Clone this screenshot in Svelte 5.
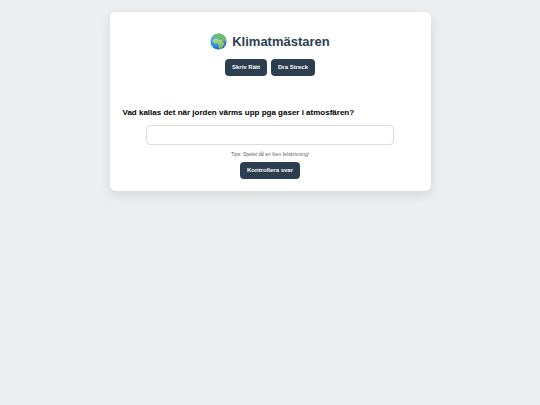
<script lang="ts">
  type Mode = 'write' | 'match';

  let mode: Mode = 'write';
  let answer = '';

  const question = 'Vad kallas det när jorden värms upp pga gaser i atmosfären?';

  function setMode(next: Mode) {
    mode = next;
    answer = '';
  }

  function checkAnswer() {
    answer = answer.trim();
  }
</script>

<style>
  :global(body) {
    background-color: #ebeff0;
    font-family: "Liberation Sans", Arial, sans-serif;
  }
  .card {
    box-sizing: border-box;
    max-width: 321px;
    margin: 12px auto;
    padding: 21px 13px 12px;
    background-color: #fff;
    border-radius: 6px;
    box-shadow: 0 4px 12px rgba(0, 0, 0, 0.1);
    text-align: center;
  }
  h1 {
    display: flex;
    justify-content: center;
    align-items: center;
    gap: 5px;
    margin: 0 0 9px;
    color: #2c3e50;
    font-size: 13px;
    line-height: 17px;
  }
  h1 svg {
    width: 17px;
    height: 17px;
  }
  nav {
    display: flex;
    justify-content: center;
    gap: 4px;
    margin-bottom: 31px;
  }
  button {
    display: block;
    padding: 5px 7px;
    background-color: #2c3e50;
    color: #fff;
    border: none;
    border-radius: 4px;
    font-family: inherit;
    font-size: 6px;
    font-weight: bold;
    line-height: 7px;
    cursor: pointer;
  }
  button:hover {
    background-color: #34495e;
  }
  form button {
    margin: 0 auto;
  }
  label {
    display: block;
    margin-bottom: 7px;
    font-size: 8px;
    font-weight: bold;
    line-height: 11px;
    color: #000;
    text-align: left;
  }
  input {
    display: block;
    width: 80%;
    height: 8px;
    margin: 0 auto 6px;
    padding: 5px;
    border: 1px solid #ddd;
    border-radius: 4px;
    font-family: inherit;
    font-size: 8px;
  }
  .tip {
    margin: 0 0 5px;
    color: #666;
    font-size: 5px;
    line-height: 6px;
  }
</style>

<main class="card">
  <h1>
    <svg viewBox="0 0 32 32" aria-hidden="true">
      <defs>
        <radialGradient id="sea" cx="36%" cy="35%" r="68%">
          <stop offset="0" stop-color="#6cc5f2" />
          <stop offset="0.6" stop-color="#2f92e6" />
          <stop offset="1" stop-color="#1558cc" />
        </radialGradient>
        <linearGradient id="land" x1="0" y1="0" x2="0" y2="1">
          <stop offset="0" stop-color="#b5d58c" />
          <stop offset="0.4" stop-color="#9ccb74" />
          <stop offset="1" stop-color="#63b55c" />
        </linearGradient>
        <clipPath id="globe"><circle cx="16" cy="16" r="15" /></clipPath>
      </defs>
      <circle cx="16" cy="16" r="15" fill="url(#sea)" />
      <g clip-path="url(#globe)">
        <path fill="#74bd63" d="M8 5l4-3 5-2 7 2 5 5 3 8-3 2-2-3-2 3-3-4-4-1-3 0-2-2-3 1-3 0-1-3 2-2z" />
        <path fill="#4fb0ea" d="M13 8l4 1 3-1 2 2-4 1-5-1z" />
        <path fill="url(#land)" d="M5 13l4-2 5 0 3 2 5 0 2 5 4 0-3 5-1 3-3 4-3 1-2-4 0-5-2-3-5 1-4-3z" />
        <path fill="#63b55c" d="M26 22l2-1-1 4-2 1z" />
      </g>
    </svg>
    <span>Klimatmästaren</span>
  </h1>

  <nav>
    <button type="button" aria-pressed={mode === 'write'} on:click={() => setMode('write')}>Skriv Rätt</button>
    <button type="button" aria-pressed={mode === 'match'} on:click={() => setMode('match')}>Dra Streck</button>
  </nav>

  <form on:submit|preventDefault={checkAnswer}>
    <label for="answer">{question}</label>
    <input id="answer" type="text" autocomplete="off" bind:value={answer} />
    <p class="tip">Tips: Spelet tål en liten felskrivning!</p>
    <button type="submit">Kontrollera svar</button>
  </form>
</main>
